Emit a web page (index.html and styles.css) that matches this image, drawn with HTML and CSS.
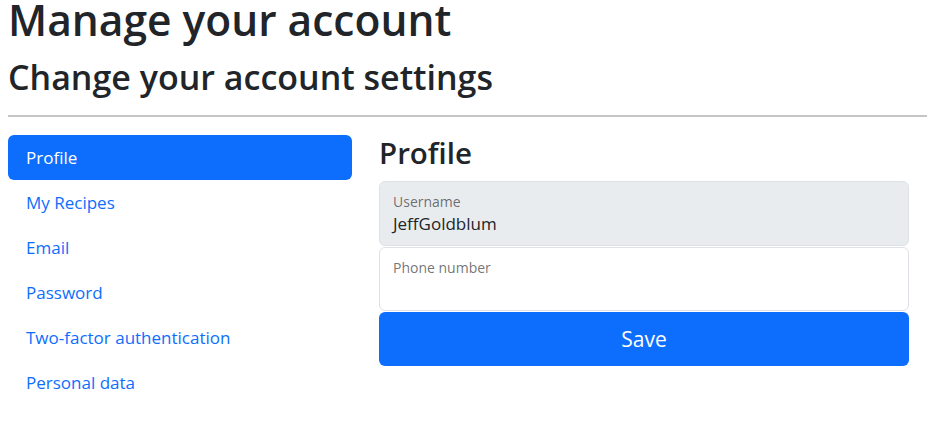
FILE: index.html
```html
<!DOCTYPE html>
<html lang="en">
<head>
<meta charset="utf-8">
<title>Manage your account</title>
<link rel="stylesheet" href="styles.css">
</head>
<body>
<header class="page-head">
  <h1 class="title">Manage your account</h1>
  <h2 class="subtitle">Change your account settings</h2>
  <hr class="divider">
</header>
<div class="layout">
  <nav class="side-nav">
    <a class="nav-link active" href="#">Profile</a>
    <a class="nav-link" href="#">My Recipes</a>
    <a class="nav-link" href="#">Email</a>
    <a class="nav-link" href="#">Password</a>
    <a class="nav-link" href="#">Two-factor authentication</a>
    <a class="nav-link" href="#">Personal data</a>
  </nav>
  <main class="content">
    <h3 class="section-title">Profile</h3>
    <form class="profile-form">
      <div class="field field-disabled">
        <label class="field-label">Username</label>
        <div class="field-value">JeffGoldblum</div>
      </div>
      <div class="field field-last">
        <label class="field-label">Phone number</label>
        <div class="field-value"></div>
      </div>
      <button class="btn-save" type="button">Save</button>
    </form>
  </main>
</div>
</body>
</html>
```
FILE: styles.css
```css
html, body {
  margin: 0;
  padding: 0;
  background: #fff;
}
body {
  font-family: "Open Sans", "Noto Sans", sans-serif;
  color: #212529;
  padding: 0 0 0 8px;
}
.page-head {
  display: flex;
  flex-direction: column;
}
.title {
  margin: 0;
  font-size: 42.5px;
  font-weight: 600;
  line-height: 37px;
  padding-top: 1px;
}
.subtitle {
  margin: 19px 0 0 0;
  font-size: 34px;
  font-weight: 600;
  line-height: 40px;
}
.divider {
  margin: 18px 0 0 0;
  border: 0;
  height: 2px;
  background: #c5c5c5;
}
.layout {
  display: flex;
  gap: 27px;
  margin-top: 18px;
  padding-right: 18px;
}
.side-nav {
  width: 344px;
  flex: none;
  display: flex;
  flex-direction: column;
}
.nav-link {
  display: block;
  padding: 9px 18px;
  font-size: 17px;
  line-height: 27px;
  color: #0d6efd;
  text-decoration: none;
  border-radius: 6px;
}
.nav-link.active {
  background: #0d6efd;
  color: #fff;
}
.content {
  flex: 1;
}
.section-title {
  margin: 0 0 10px 0;
  font-size: 29.5px;
  font-weight: 600;
  line-height: 36px;
}
.profile-form {
  display: flex;
  flex-direction: column;
}
.field {
  height: 65px;
  box-sizing: border-box;
  border: 1px solid #dee2e6;
  border-radius: 6px;
  padding: 11px 13px 0 13px;
  margin-bottom: 1px;
  background: #fff;
}
.field-last {
  height: 64px;
}
.field-disabled {
  background: #e9ecef;
}
.field-label {
  display: block;
  font-size: 14px;
  line-height: 18px;
  color: rgba(33, 37, 41, 0.65);
}
.field-value {
  font-size: 17px;
  line-height: 26px;
  color: #212529;
}
.btn-save {
  height: 54px;
  border: 0;
  border-radius: 6px;
  background: #0d6efd;
  color: #fff;
  font-family: inherit;
  font-size: 21px;
  cursor: pointer;
}
```
